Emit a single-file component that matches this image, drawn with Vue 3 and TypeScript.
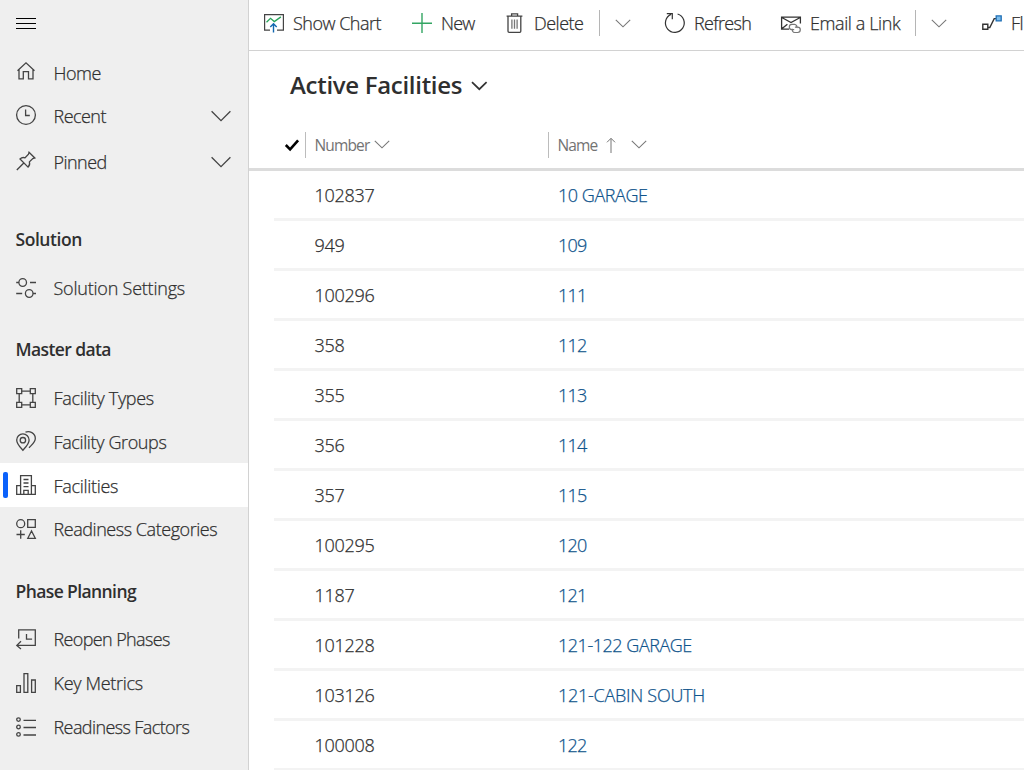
<script setup lang="ts">
interface NavItem {
  label: string
  icon: string
  tracking: number
  expandable?: boolean
  active?: boolean
}

interface NavGroup {
  title?: string
  key: string
  items: NavItem[]
}

interface Facility {
  number: string
  name: string
  tracking?: number
}

const groups: NavGroup[] = [
  {
    key: 'general',
    items: [
      { label: 'Home', icon: 'home', tracking: -0.5 },
      { label: 'Recent', icon: 'recent', tracking: -0.55, expandable: true },
      { label: 'Pinned', icon: 'pinned', tracking: -0.55, expandable: true },
    ],
  },
  {
    key: 'solution',
    title: 'Solution',
    items: [{ label: 'Solution Settings', icon: 'settings', tracking: -0.22 }],
  },
  {
    key: 'master',
    title: 'Master data',
    items: [
      { label: 'Facility Types', icon: 'types', tracking: -0.33 },
      { label: 'Facility Groups', icon: 'groups', tracking: -0.38 },
      { label: 'Facilities', icon: 'facilities', tracking: -0.3, active: true },
      { label: 'Readiness Categories', icon: 'categories', tracking: -0.45 },
    ],
  },
  {
    key: 'phase',
    title: 'Phase Planning',
    items: [
      { label: 'Reopen Phases', icon: 'reopen', tracking: -0.63 },
      { label: 'Key Metrics', icon: 'metrics', tracking: -0.32 },
      { label: 'Readiness Factors', icon: 'factors', tracking: -0.6 },
    ],
  },
]

const iconPaths: Record<string, string> = {
  home: 'M1.5 9.8 10 1.8l8.5 8M3 8.5v9.3h4.3v-7.1h5.2v7.1H17V8.5',
  recent: 'M10 .6a9.4 9.4 0 1 0 0 18.8A9.4 9.4 0 0 0 10 .6M9.6 4.5v6h4.2',
  pinned: 'M13 1.2l5.8 5.8-2 .5-3.4 3.4c.6 2 .1 3.8-1.3 5.2L4 8c1.400-1.400 3.200-1.800 5.100-1.200L12.500 3.300zM7.800 12 .8 19',
  settings: 'M.2 4.500h2.500M14 4.500h6M6.700.700a3.800 3.800 0 1 0 0 7.600 3.800 3.800 0 0 0 0-7.600M.2 15.500h6M17.200 15.500h2.800M13.200 11.700a3.800 3.800 0 1 0 0 7.600 3.800 3.800 0 0 0 0-7.600',
  types: 'M.7.7h5v5h-5zM14.300.7h5v5h-5zM.7 14.300h5v5h-5zM14.300 14.300h5v5h-5zM5.700 3.200h8.600M5.700 16.800h8.600M3.200 5.700v8.600M16.800 5.700v8.600',
  groups: 'M6.900 2.900C3.400 2.900.7 5.600.7 9c0 4 3.300 7 6.200 10.200C9.800 16 13.100 13 13.100 9c0-3.400-2.700-6.100-6.200-6.100M6.900 6.500a2.700 2.700 0 1 0 0 5.400 2.700 2.700 0 0 0 0-5.400M9.500 1.200c4-1.600 9.800.8 9.800 6.300 0 4-3.300 6-6.300 9.300',
  facilities: 'M4.600 19.300V.7h10.800v18.600M4.600 10.600H.7v8.700h18.600v-8.700h-3.900M7.500 4.500h5M7.500 8h5M7.500 11.600h5M7.800 19v-3.700h4.400V19',
  categories: 'M4.700.7a4 4 0 1 0 0 8 4 4 0 0 0 0-8M11.700.7h7.600v7.600h-7.600zM.5 15.500h8.300M4.700 11.300v8.400M15.500 12l-3.700 7.300h7.500z',
  reopen: 'M2.700 9.500V.8h16.600v15.600H1M5 12.200.8 16.400 5 20M10.500 5v5.200h5.600',
  metrics: 'M.7 12.700h3.700v6.600H.7zM8 .7h3.800v18.600H8zM15.600 7h3.700v12.300h-3.700z',
  factors: 'M2.500.8a1.800 1.800 0 1 0 0 3.600 1.800 1.800 0 0 0 0-3.600M2.500 8.200a1.800 1.800 0 1 0 0 3.600 1.800 1.800 0 0 0 0-3.600M2.500 15.600a1.800 1.800 0 1 0 0 3.600 1.800 1.800 0 0 0 0-3.600M7.500 3.300H20M7.500 10.500H20M7.500 18H20',
}

const facilities: Facility[] = [
  { number: '102837', name: '10 GARAGE', tracking: -0.45 },
  { number: '949', name: '109' },
  { number: '100296', name: '111' },
  { number: '358', name: '112' },
  { number: '355', name: '113' },
  { number: '356', name: '114' },
  { number: '357', name: '115' },
  { number: '100295', name: '120' },
  { number: '1187', name: '121' },
  { number: '101228', name: '121-122 GARAGE', tracking: -0.47 },
  { number: '103126', name: '121-CABIN SOUTH', tracking: -0.27 },
  { number: '100008', name: '122' },
]
</script>

<template>
  <div class="app">
    <nav class="sidebar">
      <button class="menu" aria-label="Menu">
        <svg width="20" height="12" viewBox="0 0 20 12"><path d="M0 .5h20M0 5.500h20M0 10.500h20" stroke="#000" /></svg>
      </button>
      <section v-for="group in groups" :key="group.key" class="group" :class="group.key">
        <h2 v-if="group.title">{{ group.title }}</h2>
        <a v-for="item in group.items" :key="item.icon" class="nav-item" :class="[item.icon, { active: item.active }]">
          <svg class="nav-icon" width="20" height="20" viewBox="0 0 20 20"><path :d="iconPaths[item.icon]" /></svg>
          <span class="nav-label" :style="{ letterSpacing: `${item.tracking}px` }">{{ item.label }}</span>
          <svg v-if="item.expandable" class="nav-chevron" width="20" height="12" viewBox="0 0 20 12"><path d="M.6 1.200 10 10.600l9.400-9.400" /></svg>
        </a>
      </section>
    </nav>

    <main class="content">
      <header class="commands">
        <svg width="20" height="20" viewBox="0 0 20 20" fill="none">
          <path d="M6 17.200H.6V1.600h18.800v15.600H13" stroke="#444" stroke-width="1.200" />
          <path d="m2.500 9.200 4-3.900 3.800 3.300 6.600-4.700" stroke="#27a35a" stroke-width="1.300" />
          <path d="M9.500 19.500v-8M6.300 14l3.200-3.200 3.200 3.200" stroke="#1267b0" stroke-width="1.400" />
        </svg>
        <span class="cmd-label show">Show Chart</span>
        <svg width="20" height="20" viewBox="0 0 20 20"><path d="M10 0v20M0 10.200h20" stroke="#33a563" stroke-width="1.400" /></svg>
        <span class="cmd-label new">New</span>
        <svg width="20" height="20" viewBox="0 0 20 20" fill="none" stroke="#444" stroke-width="1.300">
          <path d="M1.600 3.200h15.800M6.600 3V.800h6V3M3 3.200v15.100c0 .7.4 1.100 1.100 1.100h10.600c.7 0 1.100-.4 1.100-1.100V3.200" />
          <path d="M6.900 6.400v9.400M9.500 6.400v9.400M12.100 6.400v9.400" stroke="#777" />
        </svg>
        <span class="cmd-label delete">Delete</span>
        <i class="divider"></i>
        <svg class="chev" width="16" height="9" viewBox="0 0 16 9"><path d="m.8.800 7.200 7 7.200-7" /></svg>
        <svg width="20" height="20" viewBox="0 0 20 20" fill="none" stroke="#333" stroke-width="1.200">
          <path d="M12.600 1A9.400 9.400 0 1 1 6 1.400M1.800.7h5.500v5.500" />
        </svg>
        <span class="cmd-label refresh">Refresh</span>
        <svg width="20" height="20" viewBox="0 0 20 20" fill="none">
          <path d="M8 16.200H.6V4.200h18.800v6.200M.8 4.500 10 9.600l9.200-5.100M.8 15.800l5.600-4.600" stroke="#333" stroke-width="1.300" />
          <path d="M13.200 16.600h-2.300a2.600 2.600 0 0 1 0-5.200h2.600a2.600 2.600 0 0 1 2.300 3.600M13.900 14.100h2.700a2.700 2.700 0 0 1 0 5.400h-2.800a2.600 2.600 0 0 1-2.300-3.800" stroke="#777" stroke-width="1.200" />
        </svg>
        <span class="cmd-label email">Email a Link</span>
        <i class="divider"></i>
        <svg class="chev last" width="16" height="9" viewBox="0 0 16 9"><path d="m.8.800 7.200 7 7.200-7" /></svg>
        <svg width="20" height="20" viewBox="0 0 20 20" fill="none">
          <path d="M.8 11.300h5v5h-5zM6 14.500h1.800l4.400-8.900H14" stroke="#333" stroke-width="1.400" />
          <path d="M14.200 2.900h5v5h-5z" fill="#7bbcec" stroke="#1f6fb5" stroke-width="1.300" />
        </svg>
        <span class="cmd-label flow">Fl</span>
      </header>

      <h1 class="view-title">
        <span>Active Facilities</span>
        <svg width="17" height="10" viewBox="0 0 17 10"><path d="m1 1.200 7.300 7L15.600 1.200" /></svg>
      </h1>

      <div class="grid-head">
        <svg class="check" width="16" height="14" viewBox="0 0 16 14"><path d="m1.800 7 4.300 4.300 8-9" /></svg>
        <div class="column number">
          <span>Number</span>
          <svg class="chev" width="16" height="9" viewBox="0 0 16 9"><path d="m.8.800 7.200 7 7.200-7" /></svg>
        </div>
        <div class="column name">
          <span>Name</span>
          <svg class="sort" width="10" height="16" viewBox="0 0 10 16"><path d="M5 16V1.500M1 5.300l4-4 4 4" /></svg>
          <svg class="chev" width="16" height="9" viewBox="0 0 16 9"><path d="m.8.800 7.200 7 7.200-7" /></svg>
        </div>
      </div>

      <div class="rows">
        <div v-for="row in facilities" :key="row.number" class="row">
          <span class="cell">{{ row.number }}</span>
          <a class="cell link" :style="{ letterSpacing: `${row.tracking ?? -0.8}px` }">{{ row.name }}</a>
        </div>
      </div>
    </main>
  </div>
</template>

<style>
body {
  margin: 0;
  overflow: hidden;
}
</style>

<style scoped>
.app {
  display: flex;
  width: 1024px;
  height: 770px;
  overflow: hidden;
  background: #fff;
  color: #2f2f2f;
  font-family: 'Segoe UI', 'Open Sans', 'Noto Sans', sans-serif;
  font-size: 18px;
  font-weight: 300;
  white-space: nowrap;
}

svg {
  display: block;
  flex: none;
  overflow: visible;
}

.sidebar {
  box-sizing: border-box;
  flex: none;
  width: 249px;
  background: #efefef;
  border-right: 1px solid #d2d2d2;
}

.menu {
  display: block;
  height: 49.600px;
  padding: 0 0 1px 16px;
  border: 0;
  background: none;
}

.nav-item {
  position: relative;
  display: flex;
  align-items: center;
  box-sizing: border-box;
  height: 43.650px;
  padding: 0 17.500px 0 16px;
}

.nav-item.pinned {
  margin-top: 2.500px;
}

.nav-icon,
.nav-chevron {
  fill: none;
  stroke: #444;
  stroke-width: 1.300;
}

.nav-chevron {
  margin-top: 1px;
}

.nav-label,
.cmd-label,
.cell {
  -webkit-text-stroke: 0.250px currentColor;
}

.nav-label {
  flex: 1;
  margin-left: 17.500px;
  padding-top: 2px;
}

.settings .nav-label,
.types .nav-label,
.categories .nav-label,
.phase .nav-label {
  padding-top: 0;
}

.home .nav-label {
  padding-top: 3px;
}

.nav-item.active {
  background: #fff;
}

.nav-item.active::before {
  content: '';
  position: absolute;
  left: 3px;
  top: 9px;
  width: 5px;
  height: 26px;
  border-radius: 2px;
  background: #0b62fb;
}

.group h2 {
  margin: 0;
  padding-left: 15.500px;
  height: 40px;
  line-height: 40px;
  font-size: 17.500px;
  font-weight: 600;
  letter-spacing: -0.600px;
}

.group.solution h2 {
  letter-spacing: -0.450px;
}

.solution {
  margin-top: 36.300px;
}

.solution h2 {
  height: 47px;
}

.master {
  margin-top: 19px;
}

.master h2 {
  height: 47px;
}

.phase {
  margin-top: 20.500px;
}

.phase h2 {
  height: 46.500px;
}

.content {
  flex: 1;
  min-width: 0;
}

.commands {
  box-sizing: border-box;
  display: flex;
  align-items: center;
  height: 51px;
  padding: 0 0 4px 15px;
  border-bottom: 1px solid #d2d2d2;
}

.cmd-label {
  flex: none;
  box-sizing: border-box;
  padding-left: 9px;
  letter-spacing: -0.500px;
}

.show {
  width: 128px;
}

.new {
  width: 73px;
  letter-spacing: -0.800px;
}

.delete {
  width: 74px;
}

.refresh {
  width: 96px;
  letter-spacing: -0.680px;
}

.email {
  width: 114px;
  letter-spacing: -0.400px;
}

.divider {
  flex: none;
  width: 1px;
  height: 26px;
  background: #b5b5b5;
}

.chev {
  fill: none;
  stroke: #777;
  stroke-width: 1.100;
}

.commands .chev {
  margin: 0 34px 0 15px;
}

.commands .chev.last {
  margin-right: 35px;
}

.view-title {
  display: flex;
  align-items: center;
  box-sizing: border-box;
  height: 71px;
  margin: 0;
  padding: 0 0 2px 41px;
  font-size: 24px;
  font-weight: 600;
  letter-spacing: -0.300px;
}

.view-title span {
  width: 181px;
  padding-bottom: 2px;
}

.view-title svg {
  fill: none;
  stroke: #333;
  stroke-width: 1.700;
}

.grid-head {
  box-sizing: border-box;
  display: flex;
  align-items: center;
  height: 49px;
  padding-left: 35px;
  border-bottom: 3px solid #dcdcdc;
  color: #737373;
  font-size: 15.500px;
  font-weight: 400;
  letter-spacing: -0.850px;
}

.check {
  fill: none;
  stroke: #000;
  stroke-width: 2.600;
}

.column {
  box-sizing: border-box;
  display: flex;
  align-items: center;
  height: 26px;
  padding-left: 8.500px;
  border-left: 1px solid #bcbcbc;
}

.column.number {
  width: 243px;
  margin-left: 5px;
}

.column .chev {
  position: relative;
  top: -1px;
}

.number span {
  width: 59.500px;
}

.name span {
  width: 48px;
}

.sort {
  margin-right: 15px;
  fill: none;
  stroke: #777;
}

.rows {
  margin-left: 25px;
}

.row {
  box-sizing: border-box;
  display: grid;
  grid-template-columns: 243.500px 1fr;
  align-items: center;
  height: 50px;
  padding: 1px 0 0 40.500px;
  border-bottom: 3px solid #f3f3f3;
  letter-spacing: -0.250px;
}

.link {
  color: #0f548c;
}
</style>
